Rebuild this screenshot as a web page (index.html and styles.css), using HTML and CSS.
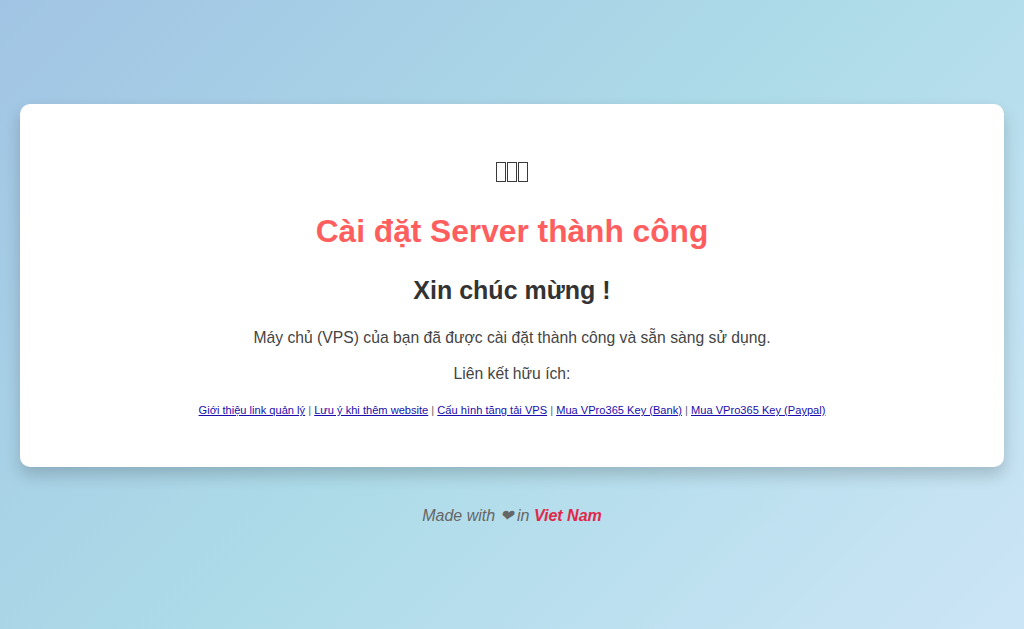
FILE: index.html
```html
<!DOCTYPE html>
<html>
<head>
  <meta charset="utf-8">
  <title>Cài đặt Server thành công</title>
  <link rel="stylesheet" href="styles.css">
</head>
<body>

  <div class="card">
    <!-- emoji with no font installed: shown as missing-glyph boxes -->
    <div class="icons"><span class="tofu"></span><span class="tofu"></span><span class="tofu"></span></div>
    <h1>Cài đặt Server thành công</h1>
    <h2>Xin chúc mừng !</h2>
    <p class="intro">Máy chủ (VPS) của bạn đã được cài đặt thành công và sẵn sàng sử dụng.</p>
    <p class="label">Liên kết hữu ích:</p>
    <div class="links">
      <a href="#">Giới thiệu link quản lý</a> |
      <a href="#">Lưu ý khi thêm website</a> |
      <a href="#">Cấu hình tăng tải VPS</a> |
      <a href="#">Mua VPro365 Key (Bank)</a> |
      <a href="#">Mua VPro365 Key (Paypal)</a>
    </div>
  </div>

  <div class="footer">Made with ❤ in <b>Viet Nam</b></div>

</body>
</html>
```

FILE: styles.css
```css
html, body {
  margin: 0;
  height: 100%;
}

body {
  font-family: "Liberation Sans", Arial, sans-serif;
  background: linear-gradient(135deg, #a1c4e4 0%, #addbe8 50%, #cce5f6 100%);
  display: flex;
  flex-direction: column;
  justify-content: center;
  align-items: center;
  padding: 0 20px;
  box-sizing: border-box;
  color: #333;
}

.card {
  background: #fff;
  width: 100%;
  box-sizing: border-box;
  border-radius: 10px;
  box-shadow: 0 8px 16px rgba(0, 0, 0, 0.18);
  text-align: center;
  padding: 57px 20px 50px;
}

.icons {
  display: flex;
  justify-content: center;
  gap: 1px;
  height: 22px;
  padding-top: 1px;
}

.tofu {
  width: 10px;
  height: 20px;
  box-sizing: border-box;
  border: 1.5px solid #3a3a3a;
}

h1 {
  color: #ff5e5e;
  font-size: 31.7px;
  line-height: 37px;
  margin: 29px 0 0;
}

h2 {
  font-size: 25px;
  line-height: 30px;
  margin: 25px 0 0;
}

p {
  font-size: 15.7px;
  line-height: 18px;
  color: #444;
  margin: 0;
}

.intro {
  margin-top: 24px;
}

.label {
  margin-top: 18px;
}

.links {
  font-size: 11.1px;
  line-height: 13px;
  color: #666;
  margin-top: 21px;
}

.links a {
  color: #1a0dab;
}

.footer {
  margin-top: 39px;
  font-style: italic;
  font-size: 16px;
  color: #666;
}

.footer b {
  color: #e0284a;
}
```
